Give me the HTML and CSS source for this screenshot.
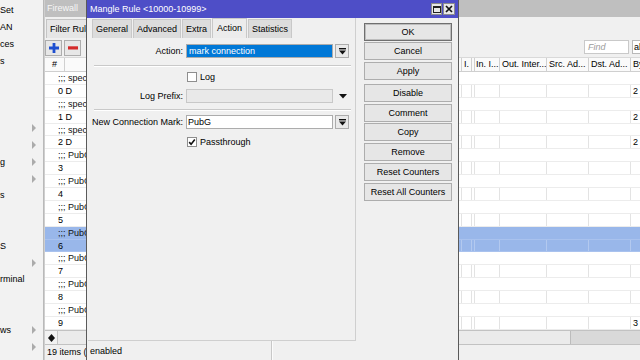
FILE: index.html
```html
<!DOCTYPE html>
<html>
<head>
<meta charset="utf-8">
<title>Mangle Rule</title>
<link rel="stylesheet" href="styles.css">
</head>
<body>
<div class="app">
  <nav class="sidebar">
    <div class="mi">Set</div>
    <div class="mi">AN</div>
    <div class="mi">ces</div>
    <div class="mi">s</div>
    <div class="mi"></div>
    <div class="mi"></div>
    <div class="mi"></div>
    <div class="mi sub"></div>
    <div class="mi sub"></div>
    <div class="mi sub">g</div>
    <div class="mi sub"></div>
    <div class="mi">s</div>
    <div class="mi"></div>
    <div class="mi"></div>
    <div class="mi">S</div>
    <div class="mi sub"></div>
    <div class="mi">rminal</div>
    <div class="mi"></div>
    <div class="mi"></div>
    <div class="mi sub">ws</div>
    <div class="mi sub"></div>
  </nav>

  <main class="desktop">
    <section class="fw">
      <header class="fw-title">Firewall</header>
      <div class="fw-tabs"><span class="fw-tab">Filter Rules</span></div>
      <div class="fw-toolbar">
        <button class="tb"><svg width="10" height="10" viewBox="0 0 10 10"><path d="M3.6 0h2.8v3.6H10v2.8H6.4V10H3.6V6.4H0V3.6h3.6z" fill="#1e4fd0"/></svg></button>
        <button class="tb"><svg width="10" height="4" viewBox="0 0 10 4"><rect x="0" y="0.3" width="10" height="3.2" fill="#d42b2b"/></svg></button>
        <span class="find">Find</span>
        <span class="allsel">all</span>
      </div>
      <div class="thead">
        <span class="th th0">#</span>
        <span class="th"></span>
        <span class="th">I.</span>
        <span class="th"></span>
        <span class="th">In. I...</span>
        <span class="th">Out. Inter...</span>
        <span class="th">Src. Ad...</span>
        <span class="th">Dst. Ad...</span>
        <span class="th">By</span>
      </div>
      <div class="rows">
        <div class="row cmt">;;; special</div>
        <div class="row data"><span class="c c0">0 D</span><span class="c"></span><span class="c"></span><span class="c"></span><span class="c"></span><span class="c"></span><span class="c"></span><span class="c"></span><span class="c">2</span></div>
        <div class="row cmt">;;; special</div>
        <div class="row data"><span class="c c0">1 D</span><span class="c"></span><span class="c"></span><span class="c"></span><span class="c"></span><span class="c"></span><span class="c"></span><span class="c"></span><span class="c">2</span></div>
        <div class="row cmt">;;; special</div>
        <div class="row data"><span class="c c0">2 D</span><span class="c"></span><span class="c"></span><span class="c"></span><span class="c"></span><span class="c"></span><span class="c"></span><span class="c"></span><span class="c">2</span></div>
        <div class="row cmt">;;; PubG</div>
        <div class="row data"><span class="c c0">3</span><span class="c"></span><span class="c"></span><span class="c"></span><span class="c"></span><span class="c"></span><span class="c"></span><span class="c"></span><span class="c"></span></div>
        <div class="row cmt">;;; PubG</div>
        <div class="row data"><span class="c c0">4</span><span class="c"></span><span class="c"></span><span class="c"></span><span class="c"></span><span class="c"></span><span class="c"></span><span class="c"></span><span class="c"></span></div>
        <div class="row cmt">;;; PubG</div>
        <div class="row data"><span class="c c0">5</span><span class="c"></span><span class="c"></span><span class="c"></span><span class="c"></span><span class="c"></span><span class="c"></span><span class="c"></span><span class="c"></span></div>
        <div class="row cmt sel">;;; PubG</div>
        <div class="row data sel"><span class="c c0">6</span><span class="c"></span><span class="c"></span><span class="c"></span><span class="c"></span><span class="c"></span><span class="c"></span><span class="c"></span><span class="c"></span></div>
        <div class="row cmt">;;; PubG</div>
        <div class="row data"><span class="c c0">7</span><span class="c"></span><span class="c"></span><span class="c"></span><span class="c"></span><span class="c"></span><span class="c"></span><span class="c"></span><span class="c"></span></div>
        <div class="row cmt">;;; PubG</div>
        <div class="row data"><span class="c c0">8</span><span class="c"></span><span class="c"></span><span class="c"></span><span class="c"></span><span class="c"></span><span class="c"></span><span class="c"></span><span class="c"></span></div>
        <div class="row cmt">;;; PubG</div>
        <div class="row data"><span class="c c0">9</span><span class="c"></span><span class="c"></span><span class="c"></span><span class="c"></span><span class="c"></span><span class="c"></span><span class="c"></span><span class="c">3</span></div>
      </div>
      <div class="hs">
        <span class="hs-ico"><svg width="7" height="8" viewBox="0 0 7 8"><path d="M3.5 0L7 4L3.5 8L0 4z" fill="#111"/></svg></span>
        <span class="hs-thumb"></span>
        <span class="hs-track"></span>
      </div>
      <div class="fw-status">19 items (</div>
    </section>

    <section class="dlg">
      <header class="dlg-title">
        <span class="ttl">Mangle Rule &lt;10000-10999&gt;</span>
        <span class="wb wb-max"><svg width="8" height="7" viewBox="0 0 8 7"><rect x="0.5" y="0.5" width="7" height="6" fill="none" stroke="#222"/><rect x="0" y="0" width="8" height="2" fill="#222"/></svg></span>
        <span class="wb wb-close"><svg width="8" height="8" viewBox="0 0 8 8"><path d="M1 1L7 7M7 1L1 7" stroke="#111" stroke-width="1.7"/></svg></span>
      </header>
      <div class="dlg-main">
        <div class="panel">
          <div class="tabs">
            <span class="tab">General</span>
            <span class="tab">Advanced</span>
            <span class="tab">Extra</span>
            <span class="tab active">Action</span>
            <span class="tab">Statistics</span>
          </div>
          <div class="form">
            <div class="frow">
              <label class="lbl">Action:</label>
              <div class="field"><span class="hl">mark connection</span></div>
              <span class="ddbtn"><svg width="7" height="7" viewBox="0 0 7 7"><rect x="0" y="0" width="7" height="1.4" fill="#111"/><path d="M0 2.6h7L3.5 6.6z" fill="#111"/></svg></span>
            </div>
            <div class="sep sep1"></div>
            <div class="crow crow-log"><span class="cb"></span><span>Log</span></div>
            <div class="frow frow-prefix">
              <label class="lbl">Log Prefix:</label>
              <div class="field dis"></div>
              <span class="ddarrow"><svg width="8" height="5" viewBox="0 0 8 5"><path d="M0 0h8L4 4.5z" fill="#111"/></svg></span>
            </div>
            <div class="sep sep2"></div>
            <div class="frow frow-mark">
              <label class="lbl">New Connection Mark:</label>
              <div class="field">PubG</div>
              <span class="ddbtn"><svg width="7" height="7" viewBox="0 0 7 7"><rect x="0" y="0" width="7" height="1.4" fill="#111"/><path d="M0 2.6h7L3.5 6.6z" fill="#111"/></svg></span>
            </div>
            <div class="crow crow-pass"><span class="cb"><svg width="8" height="8" viewBox="0 0 8 8"><path d="M1.2 4.1L3.1 6.2L6.8 1.5" fill="none" stroke="#111" stroke-width="1.6"/></svg></span><span>Passthrough</span></div>
          </div>
        </div>
        <div class="btns">
          <button class="btn def">OK</button>
          <button class="btn">Cancel</button>
          <button class="btn">Apply</button>
          <button class="btn gap">Disable</button>
          <button class="btn">Comment</button>
          <button class="btn">Copy</button>
          <button class="btn">Remove</button>
          <button class="btn">Reset Counters</button>
          <button class="btn">Reset All Counters</button>
        </div>
      </div>
      <footer class="dlg-status">
        <span class="st1">enabled</span>
        <span class="st2"></span>
      </footer>
    </section>
  </main>
</div>
</body>
</html>
```

FILE: styles.css
```css
* { box-sizing: border-box; }
html, body { margin: 0; padding: 0; }
body {
  width: 640px;
  height: 360px;
  overflow: hidden;
  font-family: "Liberation Sans", Arial, sans-serif;
  font-size: 9px;
  color: #000;
  background: #f0f0f0;
}
.app { display: flex; width: 640px; height: 360px; overflow: hidden; }

/* sidebar menu */
.sidebar {
  width: 44px;
  flex: none;
  background: #f2f2f2;
  border-right: 1px solid #b9b9b9;
  padding-top: 2.4px;
}
.mi {
  height: 16.8px;
  line-height: 16.8px;
  display: flex;
  align-items: center;
  white-space: nowrap;
  overflow: hidden;
  padding-right: 7px;
}
.mi.sub::after {
  content: "";
  margin-left: auto;
  border-left: 4px solid #ababab;
  border-top: 4px solid transparent;
  border-bottom: 4px solid transparent;
}

.desktop { position: relative; flex: 1; overflow: hidden; }

/* firewall window (behind) */
.fw {
  position: absolute;
  left: 0;
  top: 0;
  width: 672px;
  height: 362px;
  border-left: 1px solid #cfcfcf;
  background: #f0f0f0;
  display: flex;
  flex-direction: column;
}
.fw-title {
  height: 17px;
  line-height: 17px;
  flex: none;
  background: #bfbfbf;
  color: #f6f6f6;
  padding-left: 2px;
}
.fw-tabs { height: 21px; flex: none; display: flex; align-items: flex-end; padding-left: 1px; }
.fw-tab {
  height: 19px;
  line-height: 18px;
  padding: 0 4px 0 3px;
  background: #e6e6e6;
  border: 1px solid #c4c4c4;
  border-bottom: 0;
  white-space: nowrap;
}
.fw-toolbar {
  height: 19px;
  flex: none;
  display: flex;
  align-items: flex-start;
  padding: 2px 4px 0 0;
}
.tb {
  width: 17px;
  height: 16px;
  padding: 0;
  margin: 0 2px 0 0;
  border: 1px solid #adadad;
  background: #e7e7e7;
  display: flex;
  align-items: center;
  justify-content: center;
}
.find {
  margin-left: auto;
  width: 45px;
  height: 14px;
  line-height: 12px;
  border: 1px solid #c9c9c9;
  background: #fff;
  color: #9c9c9c;
  font-style: italic;
  padding-left: 3px;
}
.allsel {
  margin-left: 3px;
  width: 80px;
  height: 14px;
  line-height: 12px;
  border: 1px solid #b9b9b9;
  background: #fff;
  padding-left: 1px;
}
.thead, .row.data {
  display: grid;
  grid-template-columns: 20px 397px 10px 2px 26px 47px 42px 42px 1fr;
}
.thead {
  height: 15px;
  flex: none;
  background: #fafafa;
  border-top: 1px solid #d9d9d9;
  border-bottom: 1px solid #cfcfcf;
}
.th {
  border-right: 1px solid #d0d0d0;
  padding-left: 2px;
  line-height: 13px;
  overflow: hidden;
  white-space: nowrap;
}
.th0 { padding-left: 7px; }
.rows { height: 258px; flex: none; background: #fff; overflow: hidden; }
.row {
  height: 12.9px;
  line-height: 12px;
  border-bottom: 1px solid #ececec;
  white-space: nowrap;
  overflow: hidden;
}
.row.cmt { padding-left: 13px; color: #111; }
.c { border-right: 1px solid #e3e3e3; padding-left: 2px; overflow: hidden; }
.c.c0 { padding-left: 13px; border-right: 0; overflow: visible; }
.row.sel { background: #99b7ea; border-bottom-color: #a9c2ee; }
.row.sel .c { border-right-color: #b3c9ef; }
.hs {
  height: 15px;
  flex: none;
  display: flex;
  border-top: 1px solid #c2c2c2;
  border-bottom: 1px solid #c2c2c2;
}
.hs-ico {
  width: 13px;
  background: #f2f2f2;
  border-right: 1px solid #c6c6c6;
  display: flex;
  align-items: center;
  justify-content: center;
}
.hs-thumb { width: 513px; background: #ebebeb; border-right: 1px solid #bcbcbc; }
.hs-track { flex: 1; background: #d9d9d9; }
.fw-status { height: 17px; flex: none; line-height: 15px; padding-left: 2px; white-space: nowrap; }

/* mangle rule dialog */
.dlg {
  position: absolute;
  left: 42px;
  top: 0;
  width: 373px;
  height: 362px;
  border-left: 1px solid #5a5a5a;
  border-right: 1px solid #5a5a5a;
  background: #f0f0f0;
  display: flex;
  flex-direction: column;
}
.dlg-title {
  height: 18px;
  flex: none;
  background: #4e4ec7;
  color: #fff;
  display: flex;
  align-items: center;
  padding: 0 3px 0 3px;
}
.ttl { flex: 1; white-space: nowrap; }
.wb {
  height: 12px;
  border: 1px solid #8c8c8c;
  background: #e8e8e8;
  display: flex;
  align-items: center;
  justify-content: center;
}
.wb-max { width: 11px; }
.wb-close { width: 12px; margin-left: 1px; }
.dlg-main { flex: 1; display: flex; min-height: 0; }
.panel {
  width: 268px;
  flex: none;
  margin-left: 1px;
  border-right: 1px solid #cfcfcf;
  border-bottom: 1px solid #cfcfcf;
  display: flex;
  flex-direction: column;
}
.tabs {
  height: 20px;
  flex: none;
  display: flex;
  align-items: flex-end;
  padding-left: 4px;
  gap: 1px;
}
.tab {
  height: 19px;
  line-height: 18px;
  padding: 0 3px;
  background: #dcdcdc;
  border: 1px solid #c8c8c8;
  border-bottom: 0;
  white-space: nowrap;
}
.tab.active { height: 20px; line-height: 19px; background: #ececec; padding: 0 4px; }
.form { padding-top: 6px; }
.frow { display: flex; align-items: center; height: 14px; }
.lbl { width: 95px; flex: none; text-align: right; white-space: nowrap; }
.field {
  width: 147px;
  height: 14px;
  flex: none;
  margin-left: 3px;
  border: 1px solid #acacac;
  background: #fff;
  line-height: 12px;
  padding: 0 1px;
  white-space: nowrap;
  overflow: hidden;
}
.field.dis { background: #e9e9e9; border-color: #c8c8c8; }
.hl { display: block; height: 12px; margin: 0 -1px; padding-left: 2px; background: #0078d7; color: #fff; }
.ddbtn {
  width: 14px;
  height: 14px;
  margin-left: 2px;
  border: 1px solid #acacac;
  background: #e9e9e9;
  display: flex;
  align-items: center;
  justify-content: center;
}
.ddarrow { width: 14px; height: 14px; margin-left: 3px; display: flex; align-items: center; justify-content: center; }
.sep { height: 2px; margin: 0 4px 0 6px; border-top: 1px solid #c9c9c9; border-bottom: 1px solid #fff; }
.sep1 { margin-top: 7px; }
.sep2 { margin-top: 6px; }
.crow { display: flex; align-items: center; height: 10px; padding-left: 99px; }
.crow-log { margin-top: 5px; }
.crow-pass { margin-top: 8px; }
.frow-prefix { margin-top: 7px; }
.frow-mark { margin-top: 4px; }
.cb {
  width: 10px;
  height: 10px;
  margin-right: 3px;
  border: 1px solid #8e8e8e;
  background: #fff;
  display: flex;
  align-items: center;
  justify-content: center;
}
.btns {
  flex: 1;
  display: flex;
  flex-direction: column;
  padding: 4.5px 0 0 8px;
  gap: 1.75px;
}
.btn {
  width: 88px;
  height: 18px;
  flex: none;
  margin: 0;
  padding: 0;
  font: inherit;
  color: #000;
  border: 1px solid #adadad;
  background: #e6e6e6;
  text-align: center;
  white-space: nowrap;
}
.btn.def { border-color: #6f6f6f; box-shadow: inset 0 0 0 1px #bdbdbd; }
.btn.gap { margin-top: 2px; }
.dlg-status { height: 21px; flex: none; display: flex; }
.st1 {
  width: 184px;
  margin-left: 1px;
  line-height: 20px;
  padding-left: 2px;
  border-right: 1px solid #c8c8c8;
}
.st2 { flex: 1; border-left: 1px solid #fbfbfb; }
```
